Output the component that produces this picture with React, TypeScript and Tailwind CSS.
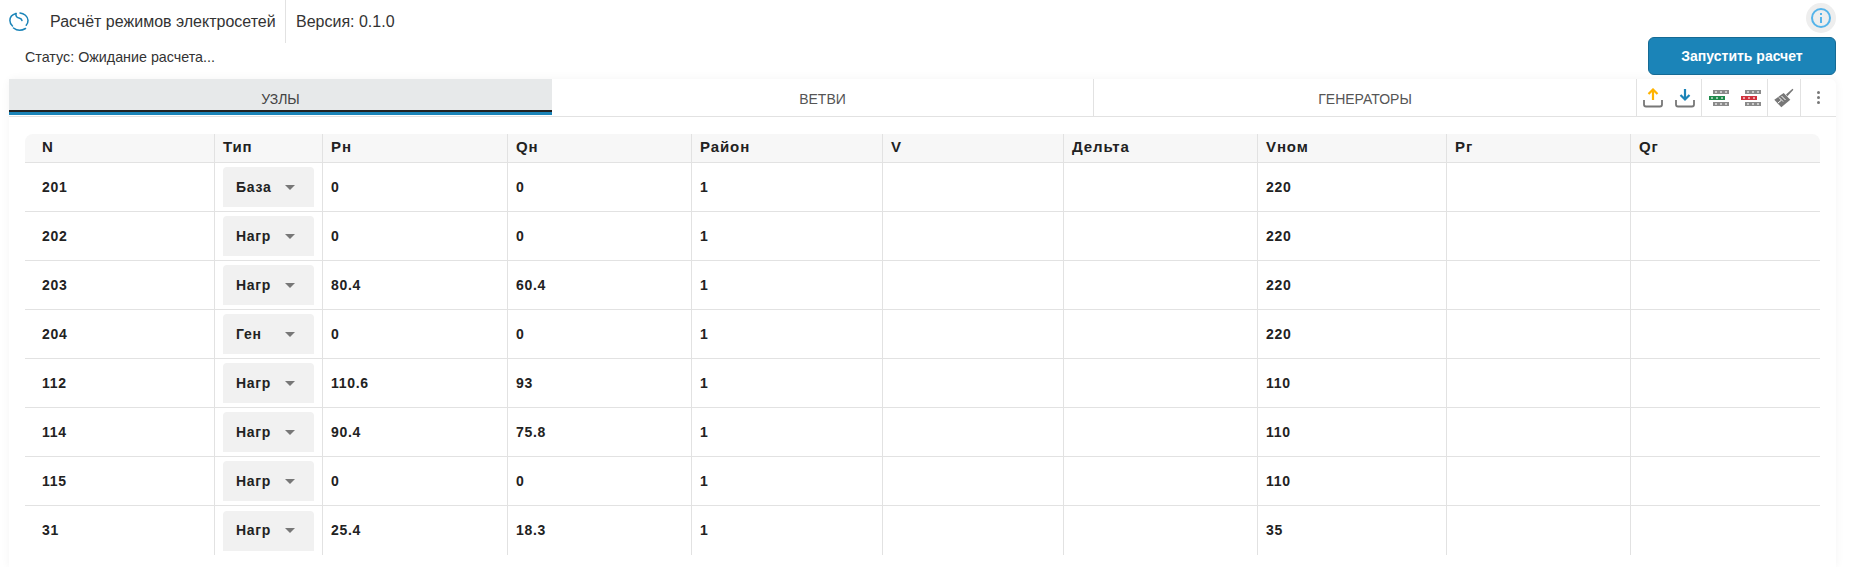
const rows = [
  ["201", "База", "0", "0", "1", "220"],
  ["202", "Нагр", "0", "0", "1", "220"],
  ["203", "Нагр", "80.4", "60.4", "1", "220"],
  ["204", "Ген", "0", "0", "1", "220"],
  ["112", "Нагр", "110.6", "93", "1", "110"],
  ["114", "Нагр", "90.4", "75.8", "1", "110"],
  ["115", "Нагр", "0", "0", "1", "110"],
  ["31", "Нагр", "25.4", "18.3", "1", "35"],
];

const headers = ["N", "Тип", "Рн", "Qн", "Район", "V", "Дельта", "Vном", "Рг", "Qг"];

const grid =
  "grid grid-cols-[189px_108px_185px_184px_191px_181px_194px_189px_184px_189px]";

function Logo() {
  return (
    <svg width="20" height="20" viewBox="0 0 20 20" fill="none" stroke="#1b84b8" strokeWidth="1.500" strokeLinecap="round">
      <path d="M7 1.500C3.300 2.500 .900 5 .900 8.500c0 2.300 .9 4 2.600 5.500" />
      <path d="M7 1.500C6.500 4 7.800 5.500 10 6c1.700.4 2.700 1.200 3 2.500" />
      <path d="M11 1c4 .3 7.800 3.300 8 7.300 .1 2-.5 3.500-1.800 5" />
      <path d="M4.500 16c3.500 2.800 8 2.900 12 .5" />
    </svg>
  );
}

function Bars({ color }: { color: string }) {
  const dots = [2, 7, 12];
  return (
    <svg width="20" height="16" viewBox="0 0 20 16">
      {[
        { x: 4, y: 0, fill: "#8a8a8a" },
        { x: 0, y: 6, fill: color },
        { x: 4, y: 12, fill: "#8a8a8a" },
      ].map((b) => (
        <g key={b.y}>
          <rect x={b.x} y={b.y} width="16" height="4" fill={b.fill} />
          {dots.map((d) => (
            <rect key={d} x={b.x + d} y={b.y + 1} width="2" height="2" fill="#ffffff" fillOpacity="0.55" />
          ))}
        </g>
      ))}
    </svg>
  );
}

function Tray({ color, up }: { color: string; up: boolean }) {
  return (
    <svg width="20" height="20" viewBox="0 0 20 20" fill="none">
      <path d="M1 12v4.500a2 2 0 0 0 2 2h14a2 2 0 0 0 2-2V12" stroke="#777" strokeWidth="1.800" />
      <path
        d={up ? "M10 12V1.500M5.500 6 10 1.500 14.500 6" : "M10 1v10.500M5.500 7 10 11.500 14.500 7"}
        stroke={color}
        strokeWidth="2.200"
      />
    </svg>
  );
}

function Broom() {
  return (
    <svg width="20" height="20" viewBox="0 0 20 20">
      <path d="M12 6.500 18.500 .800l.9 1-6 6.500z" fill="#777" />
      <path d="M.300 11.700 9.700 5l6.600 6.700-9 7.600z" fill="#777" />
      <path d="M5 9.500l4 4M7.500 8l4 4M4 15l3-2.500" stroke="#fff" strokeWidth="1" />
    </svg>
  );
}

export default function App() {
  return (
    <div className="h-[567px] w-[1851px] bg-white font-['Liberation_Sans',Arial,sans-serif] overflow-hidden">
      <div className="flex h-[43px] items-stretch">
        <div className="flex items-center pl-[9px] w-[286px] border-r border-[#e2e2e2]">
          <Logo />
          <span className="ml-[21px] text-[16px] text-[#333]">Расчёт режимов электросетей</span>
        </div>
        <span className="ml-[10px] flex items-center text-[16px] text-[#333]">Версия: 0.1.0</span>
        <div className="ml-auto mr-[15px] mt-[3px] flex h-[30px] w-[30px] items-center justify-center rounded-full bg-[#eeeeee]">
          <svg width="24" height="24" viewBox="0 0 24 24" fill="none" stroke="#55b4ea" strokeWidth="2">
            <circle cx="12" cy="12" r="9" />
            <path d="M12 11v6M12 7v2" />
          </svg>
        </div>
      </div>
      <div className="flex h-[36px] items-start pl-[25px] pr-[15px]">
        <span className="mt-[4px] text-[14.300px] text-[#333]">Статус: Ожидание расчета...</span>
        <button className="ml-auto -mt-[6px] h-[38px] w-[188px] rounded-[6px] border border-[#156a94] bg-[#1b84b8] text-[14px] font-bold text-white">
          Запустить расчет
        </button>
      </div>
      <div className="ml-[9px] w-[1827px] h-[488px] rounded-t-[6px] bg-white shadow-[0_0_10px_rgba(0,0,0,0.05)]">
        <div className="flex h-[38px] border-b border-[#e2e2e2]">
          <div className="flex w-[543px] flex-col">
            <div className="flex h-[31px] items-center justify-center pt-[9px] bg-[#e7e9ea] text-[14px] text-[#444]">
              УЗЛЫ
            </div>
            <div className="h-[2px] bg-[#222]" />
            <div className="h-[3px] bg-[#1b84b8]" />
          </div>
          <div className="flex w-[542px] items-center justify-center pt-[3px] border-r border-[#e2e2e2] text-[14px] text-[#555]">
            ВЕТВИ
          </div>
          <div className="flex w-[542px] items-center justify-center pt-[3px] text-[14px] text-[#555]">
            ГЕНЕРАТОРЫ
          </div>
          <div className="flex flex-1 items-center border-l border-[#e2e2e2]">
            <div className="flex h-full w-[65px] items-center justify-center gap-[12px] border-r border-[#e2e2e2]">
              <Tray color="#ffb300" up />
              <Tray color="#1b84b8" up={false} />
            </div>
            <div className="flex h-full w-[66px] items-center justify-center gap-[12px] border-r border-[#e2e2e2]">
              <Bars color="#1f8a4c" />
              <Bars color="#d0303c" />
            </div>
            <div className="flex h-full w-[33px] items-center justify-center border-r border-[#e2e2e2]">
              <Broom />
            </div>
            <div className="flex flex-1 flex-col items-center justify-center gap-[2px]">
              <span className="h-[3px] w-[3px] rounded-full bg-[#777]" />
              <span className="h-[3px] w-[3px] rounded-full bg-[#777]" />
              <span className="h-[3px] w-[3px] rounded-full bg-[#777]" />
            </div>
          </div>
        </div>
        <div className="px-[16px] pt-[17px] text-[14px] font-bold text-[#222] tracking-[0.7px]">
          <div className={`${grid} h-[29px] rounded-t-[8px] border-b border-[#e2e2e2] bg-[#f7f7f7] text-[15px] tracking-[0.9px]`}>
            {headers.map((h, i) => (
              <div key={h} className={`flex items-center pb-[2px] ${i ? "border-l border-[#e2e2e2] pl-[8px]" : "pl-[17px]"}`}>
                {h}
              </div>
            ))}
          </div>
          {rows.map((r, idx) => (
            <div key={idx} className={`${grid} h-[49px] ${idx < 7 ? "border-b border-[#e2e2e2]" : ""}`}>
              <div className="flex items-center pl-[17px]">{r[0]}</div>
              <div className="flex items-center border-l border-[#e2e2e2] pl-[8px]">
                <div className="flex h-[40px] w-[91px] items-center justify-between rounded-t-[4px] bg-[#f1f1f1] pl-[13px] pr-[19px]">
                  {r[1]}
                  <span className="h-0 w-0 border-x-[5px] border-t-[5px] border-x-transparent border-t-[#777]" />
                </div>
              </div>
              <div className="flex items-center border-l border-[#e2e2e2] pl-[8px]">{r[2]}</div>
              <div className="flex items-center border-l border-[#e2e2e2] pl-[8px]">{r[3]}</div>
              <div className="flex items-center border-l border-[#e2e2e2] pl-[8px]">{r[4]}</div>
              <div className="border-l border-[#e2e2e2]" />
              <div className="border-l border-[#e2e2e2]" />
              <div className="flex items-center border-l border-[#e2e2e2] pl-[8px]">{r[5]}</div>
              <div className="border-l border-[#e2e2e2]" />
              <div className="border-l border-[#e2e2e2]" />
            </div>
          ))}
        </div>
      </div>
    </div>
  );
}
